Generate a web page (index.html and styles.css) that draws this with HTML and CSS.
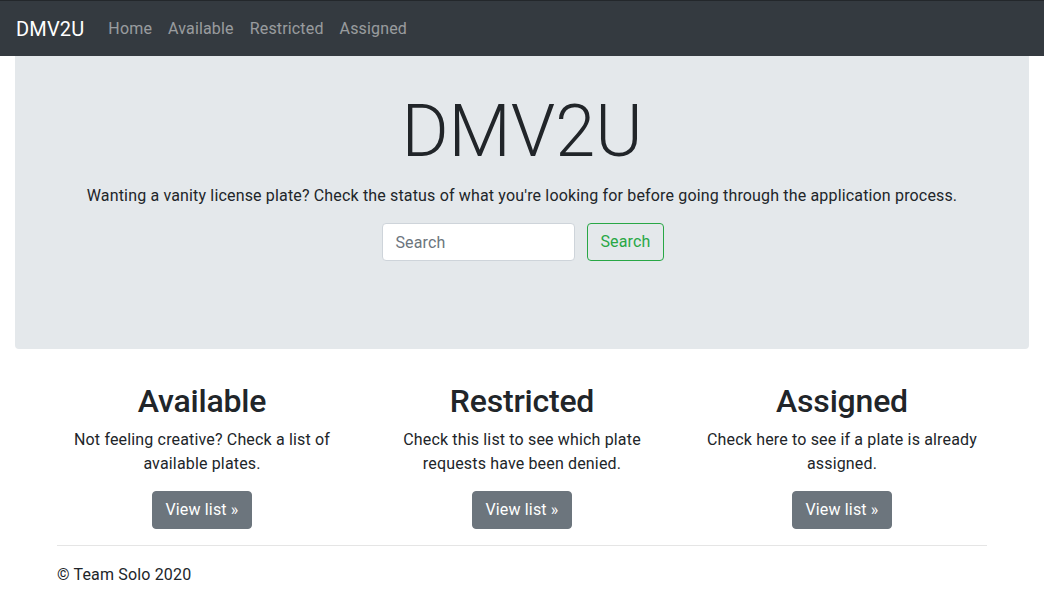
FILE: index.html
```html
<!DOCTYPE html>
<html lang="en">
<head>
<meta charset="utf-8">
<title>DMV2U</title>
<link rel="stylesheet" href="styles.css">
</head>
<body>
<nav class="navbar">
  <a class="brand" href="#">DMV2U</a>
  <ul class="nav-links">
    <li><a href="#">Home</a></li>
    <li><a href="#">Available</a></li>
    <li><a href="#">Restricted</a></li>
    <li><a href="#">Assigned</a></li>
  </ul>
</nav>
<main>
  <div class="jumbotron">
    <div class="container center">
      <h1 class="display">DMV2U</h1>
      <p class="lead">Wanting a vanity license plate? Check the status of what you're looking for before going through the application process.</p>
      <form class="search-form">
        <input class="search-input" type="text" placeholder="Search">
        <button class="btn btn-outline-success" type="button">Search</button>
      </form>
    </div>
  </div>
  <div class="container">
    <div class="row">
      <div class="col">
        <h2>Available</h2>
        <p>Not feeling creative? Check a list of available plates.</p>
        <a class="btn btn-secondary" href="#">View list &raquo;</a>
      </div>
      <div class="col">
        <h2>Restricted</h2>
        <p>Check this list to see which plate requests have been denied.</p>
        <a class="btn btn-secondary" href="#">View list &raquo;</a>
      </div>
      <div class="col">
        <h2>Assigned</h2>
        <p>Check here to see if a plate is already assigned.</p>
        <a class="btn btn-secondary" href="#">View list &raquo;</a>
      </div>
    </div>
    <hr class="divider">
    <footer class="footer">
      <p>&copy; Team Solo 2020</p>
    </footer>
  </div>
</main>
</body>
</html>
```

FILE: styles.css
```css
* { box-sizing: border-box; }
html, body { margin: 0; }
body {
  font-family: Roboto, "Liberation Sans", sans-serif;
  font-size: 16px;
  line-height: 1.5;
  letter-spacing: 0.16px;
  color: #212529;
  background: #fff;
}
a { text-decoration: none; }

.navbar {
  height: 56px;
  background: #343a40;
  border-top: 1px solid #23272b;
  display: flex;
  align-items: center;
  padding: 0 16px;
}
.brand {
  color: #fff;
  font-size: 20px;
  margin-right: 16px;
}
.nav-links {
  list-style: none;
  display: flex;
  margin: 0;
  padding: 0;
}
.nav-links a {
  display: block;
  color: rgba(255,255,255,.5);
  padding: 8px 8px;
}

.jumbotron {
  background: #e4e8eb;
  margin: 0 15px 16px;
  border-radius: 0 0 4px 4px;
  padding: 33px 0 88px;
}
.container {
  width: 960px;
  margin: 0 auto;
  padding: 0 15px;
}
.center { text-align: center; }
.display {
  font-size: 72px;
  font-weight: 300;
  line-height: 1.2;
  letter-spacing: 0;
  margin: 0 0 8px;
}
.lead {
  margin: 0 0 16px;
  position: relative;
  top: 1px;
}
.search-form {
  display: flex;
  justify-content: center;
  gap: 12px;
  padding-left: 2px;
}
.search-input {
  width: 193px;
  height: 38px;
  padding: 6px 12px;
  font: inherit;
  letter-spacing: inherit;
  color: #495057;
  border: 1px solid #ced4da;
  border-radius: 4px;
  background: #fff;
}
.search-input::placeholder { color: #6c757d; }
.btn {
  display: inline-block;
  font: inherit;
  letter-spacing: inherit;
  line-height: 1.5;
  padding: 6px 12px;
  border-radius: 4px;
  border: 1px solid transparent;
}
.btn-outline-success {
  color: #28a745;
  border-color: #28a745;
  background: transparent;
}
.btn-secondary {
  color: #fff;
  background: #6c757d;
  border-color: #6c757d;
}

.row {
  display: flex;
  margin: 0 -15px;
}
.col {
  flex: 1;
  padding: 0 15px;
  text-align: center;
}
.col h2 {
  font-size: 32px;
  font-weight: 500;
  line-height: 1.2;
  letter-spacing: -0.2px;
  margin: 17px 0 7px;
}
.col p { margin: 0 0 15px; }
.divider {
  border: 0;
  border-top: 1px solid rgba(0,0,0,.1);
  margin: 16px 0 17px;
}
.footer p { margin: 0; }
```
